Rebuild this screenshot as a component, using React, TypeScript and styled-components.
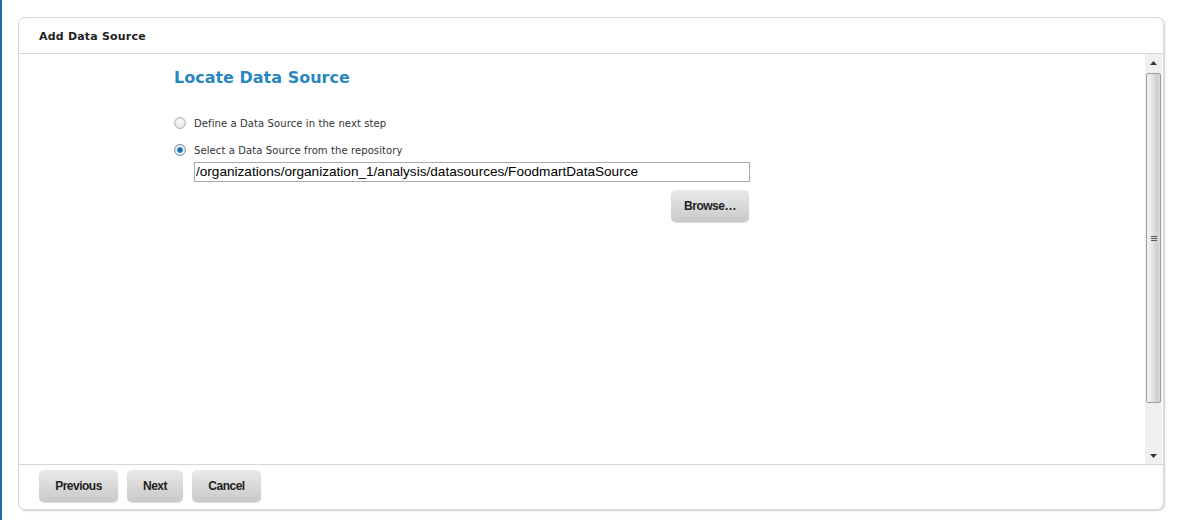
import * as React from 'react';
import styled, { createGlobalStyle } from 'styled-components';

const GlobalStyle = createGlobalStyle`
    html, body {
        margin: 0;
        padding: 0;
        background: #fff;
    }
    body {
        font-family: "DejaVu Sans", Verdana, sans-serif;
        width: 1179px;
        height: 520px;
        overflow: hidden;
    }
`;

export default function App() {
    const [choice, setChoice] = React.useState<'define' | 'select'>('select');

    return (
        <>
            <GlobalStyle />
            <StyledPage>
                <StyledEdge />
                <StyledPanel>
                    <StyledHeader>Add Data Source</StyledHeader>
                    <StyledBody>
                        <StyledContent>
                            <StyledTitle>Locate Data Source</StyledTitle>
                            <StyledOption>
                                <StyledRadio
                                    type="radio"
                                    name="source"
                                    checked={choice === 'define'}
                                    onChange={() => setChoice('define')}
                                />
                                Define a Data Source in the next step
                            </StyledOption>
                            <StyledOption className="n2">
                                <StyledRadio
                                    type="radio"
                                    name="source"
                                    checked={choice === 'select'}
                                    onChange={() => setChoice('select')}
                                />
                                Select a Data Source from the repository
                            </StyledOption>
                            <StyledPath>
                                <StyledInput defaultValue="/organizations/organization_1/analysis/datasources/FoodmartDataSource" />
                                <StyledBrowseRow>
                                    <StyledButton type="button" wide>Browse…</StyledButton>
                                </StyledBrowseRow>
                            </StyledPath>
                        </StyledContent>
                        <StyledScrollbar>
                            <StyledArrow>
                                <svg width="7" height="4" viewBox="0 0 7 4"><path d="M0 4 L3.5 0 L7 4 Z" fill="#333" /></svg>
                            </StyledArrow>
                            <StyledTrack>
                                <StyledThumb>
                                    <StyledGrip><i /><i /><i /></StyledGrip>
                                </StyledThumb>
                            </StyledTrack>
                            <StyledArrow>
                                <svg width="7" height="4" viewBox="0 0 7 4"><path d="M0 0 L7 0 L3.5 4 Z" fill="#333" /></svg>
                            </StyledArrow>
                        </StyledScrollbar>
                    </StyledBody>
                    <StyledFooter>
                        <StyledButton type="button" style={{ width: 79 }}>Previous</StyledButton>
                        <StyledButton type="button" style={{ width: 56 }}>Next</StyledButton>
                        <StyledButton type="button" style={{ width: 69 }}>Cancel</StyledButton>
                    </StyledFooter>
                </StyledPanel>
            </StyledPage>
        </>
    );
}

const StyledPage = styled.div`
    display: flex;
    height: 520px;
`;

const StyledEdge = styled.div`
    width: 2px;
    background: #1c6ea4;
    flex-shrink: 0;
`;

const StyledPanel = styled.div`
    margin: 17px 0 10px 16px;
    width: 1144px;
    height: 491px;
    border: 1px solid #d9d9d9;
    border-radius: 7px;
    box-shadow: 1px 1px 2px rgba(0, 0, 0, 0.18);
    display: flex;
    flex-direction: column;
    overflow: hidden;
    background: #fff;
`;

const StyledHeader = styled.div`
    flex-shrink: 0;
    border-bottom: 1px solid #d6d6d6;
    padding: 1px 0 0 20px;
    box-sizing: border-box;
    height: 36px;
    display: flex;
    align-items: center;
    font-size: 11px;
    font-weight: bold;
    letter-spacing: 0.2px;
    color: #222;
`;

const StyledBody = styled.div`
    flex: 1;
    display: flex;
    min-height: 0;
    border-bottom: 1px solid #d6d6d6;
`;

const StyledContent = styled.div`
    flex: 1;
    padding: 14px 0 0 155px;
`;

const StyledTitle = styled.h1`
    margin: 0 0 28px;
    font-size: 16px;
    font-weight: bold;
    color: #2a87c2;
    line-height: 20px;
`;

const StyledOption = styled.label`
    display: flex;
    align-items: center;
    height: 14px;
    font-size: 10px;
    letter-spacing: 0.1px;
    color: #333;
    margin-bottom: 13px;
    &.n2 {
        margin-bottom: 0;
    }
`;

const StyledRadio = styled.input`
    width: 12px;
    height: 12px;
    margin: 0 8px 0 0;
    appearance: none;
    border-radius: 50%;
    border: 1px solid #b5b5b5;
    background: radial-gradient(circle at 50% 40%, #fafafa, #dcdcdc);
    &:checked {
        border-color: #7a8fa5;
        background: radial-gradient(circle, #0f4f8a 0, #2f8fd3 2.5px, #f4f4f4 3.5px, #dadada 6px);
    }
`;

const StyledPath = styled.div`
    margin: 4px 0 0 20px;
    width: 556px;
`;

const StyledInput = styled.input`
    box-sizing: border-box;
    width: 556px;
    height: 20px;
    border: 1px solid #a9a9a9;
    padding: 0 1px;
    font-family: "Liberation Sans", Arial, sans-serif;
    font-size: 13.6px;
    color: #000;
    outline: none;
`;

const StyledBrowseRow = styled.div`
    display: flex;
    justify-content: flex-end;
    margin-top: 8px;
    padding-right: 1px;
`;

const StyledButton = styled.button<{ wide?: boolean }>`
    height: 32px;
    width: ${({ wide }) => (wide ? '78px' : 'auto')};
    border: none;
    border-radius: 5px;
    background: linear-gradient(#e9e9e9, #c9c9c9);
    box-shadow: 0 1px 1px rgba(0, 0, 0, 0.15);
    font-family: "Liberation Sans", Arial, sans-serif;
    font-size: 12px;
    font-weight: bold;
    letter-spacing: -0.5px;
    color: #222;
    padding: 0;
    cursor: pointer;
`;

const StyledScrollbar = styled.div`
    width: 17px;
    margin-right: 1px;
    background: #efefef;
    display: flex;
    flex-direction: column;
`;

const StyledArrow = styled.div`
    height: 17px;
    display: flex;
    align-items: center;
    justify-content: center;
`;

const StyledTrack = styled.div`
    flex: 1;
    padding: 2px 0 44px 1px;
    display: flex;
`;

const StyledThumb = styled.div`
    flex: 1;
    margin-right: 1px;
    border: 1px solid #9e9e9e;
    border-radius: 2px;
    background: linear-gradient(90deg, #f4f4f4, #e2e2e2 45%, #cfcfcf 80%, #dcdcdc);
    display: flex;
    align-items: center;
    justify-content: center;
`;

const StyledGrip = styled.div`
    display: flex;
    flex-direction: column;
    gap: 1px;
    i {
        display: block;
        width: 6px;
        height: 1px;
        background: #555;
    }
`;

const StyledFooter = styled.div`
    box-sizing: border-box;
    height: 44px;
    flex-shrink: 0;
    display: flex;
    align-items: flex-start;
    gap: 9px;
    padding: 5px 0 0 20px;
`;
